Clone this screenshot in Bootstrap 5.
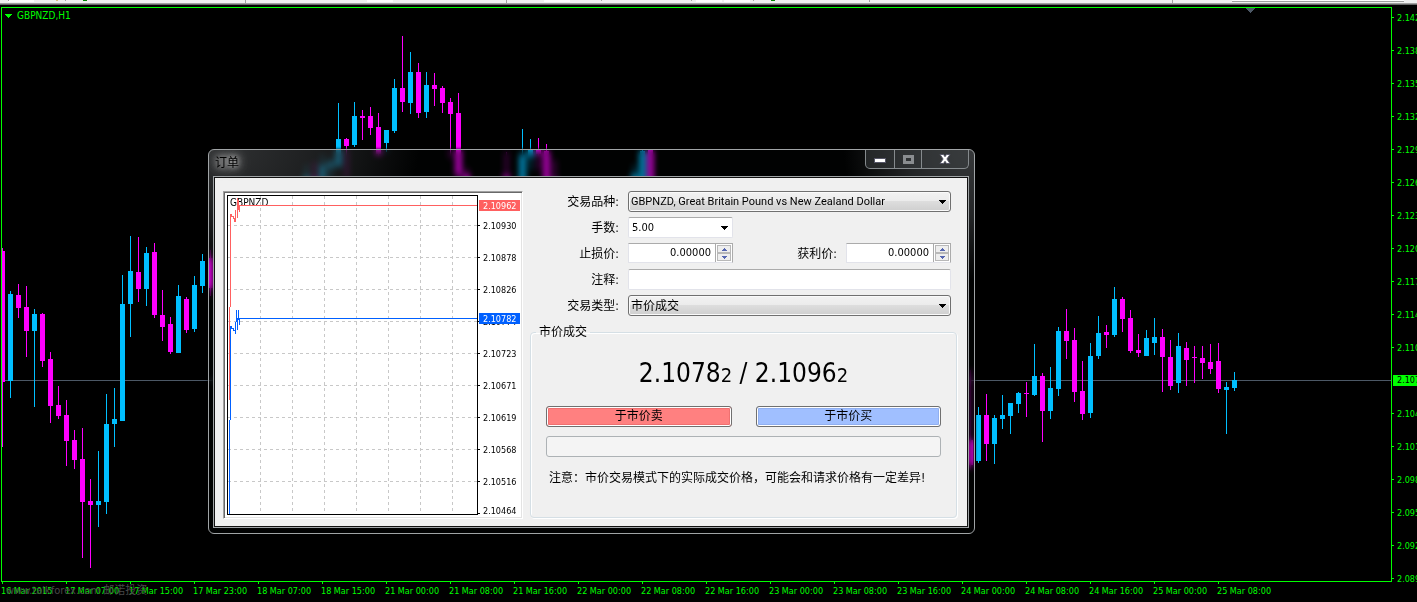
<!DOCTYPE html>
<html lang="zh-CN">
<head>
<meta charset="utf-8">
<meta name="viewport" content="width=device-width, initial-scale=1">
<title>GBPNZD,H1</title>
<link href="https://cdn.jsdelivr.net/npm/bootstrap@5.3.0/dist/css/bootstrap.min.css" rel="stylesheet">
<style>
:root{--lime:#0f0;--ui:"DejaVu Sans Condensed","Noto Sans CJK SC",sans-serif}
body{background:#000;font-family:var(--ui);font-size:12px;line-height:20px;color:#000}
svg{shape-rendering:crispEdges}
.strip{height:5px;background:#f0f0f0;border-bottom:1px solid #696969;box-shadow:inset 0 -1px #a0a0a0}
.strip svg{background:#f0f0f0}
.pane{min-width:0}
.work{min-height:0}
.plot{border:1px solid var(--lime);margin:2px 0 0 1px;min-width:0}
.symbol{left:2px;top:0;color:var(--lime);font-size:10px;line-height:16px;gap:5px}
.prices{width:25px;padding-top:3px;color:var(--lime);font-size:9px;line-height:20px}
.prices div{height:33px;flex:none;position:relative;padding-left:5px}
.prices div::before{content:"";position:absolute;left:0;top:9px;width:2px;height:1px;background:var(--lime)}
.prices .now{line-height:11px;height:11px;margin:4px 0 18px 1px;padding-left:4px;background:var(--lime);color:#000}
.prices .now::before{display:none}
.times{height:20px;padding-left:1px;color:var(--lime);font-size:9px;line-height:18px}
.times div{width:64px;flex:none;position:relative}
.times div::before{content:"";position:absolute;left:1px;top:0;width:1px;height:2px;background:var(--lime)}
.stamp{left:6px;bottom:0;color:#484848;font-size:11px;line-height:22px}
.dlg{left:208px;top:149px;width:767px;padding:0 5px 5px 4px;border:1px solid #a0a4a6;border-radius:6px;overflow:hidden;
 -webkit-backdrop-filter:blur(3px);backdrop-filter:blur(3px);box-shadow:0 0 3px #000;
 background:radial-gradient(ellipse 210px 120px at 0 0,rgba(70,72,74,.7) 0,rgba(50,52,54,.5) 60%,transparent),
 radial-gradient(ellipse 130px 130px at 100% 0,rgba(60,62,64,.9),rgba(50,52,54,.7) 50%,transparent),rgba(10,15,20,.1)}
.cap{height:26px;padding-left:2px}
.cap h1{font-size:12px;line-height:20px;padding-top:3px;text-shadow:0 0 5px #bbb,0 0 8px #bbb,0 0 12px #aaa,0 0 16px #999}
.winbtns{height:19px;border:1px solid #858a8d;border-top:0;border-radius:0 0 5px 5px;overflow:hidden;background:rgba(60,64,66,.5)}
.winbtns button{border:0;border-left:1px solid #858a8d;background:none;padding:0;width:27px;display:flex;align-items:center;justify-content:center}
.winbtns button:first-child{border-left:0;width:28px}
.winbtns button:last-child{width:47px}
.winbtns button:first-child svg{margin-top:4px}
.winbtns button:last-child svg{shape-rendering:auto}
.client{background:#f0f0f0;border:1px solid #a0a4a6;outline:1px solid #111;outline-offset:-2px;padding:14px 11px 8px 9px;gap:7px}
.tick{border:1px solid;border-color:#a0a0a0 #fff #fff #a0a0a0;box-shadow:inset 1px 1px #696969,inset -1px -1px #e3e3e3;background:#fff;width:300px;height:328px;flex:none}
.tick text{font:9px "DejaVu Sans Condensed",sans-serif}
.tick .pair{font-size:10px}
.orderform{min-width:0}
.field{display:grid;grid-template-columns:89px 105px 1fr 105px;column-gap:9px;height:26px;margin-right:6px}
.field label{text-align:right;height:20px;line-height:22px}
.field .wide{grid-column:2/5}
.ctl{width:100%;height:21px;border:1px solid;border-color:#ababab #e2e3ea #e2e3ea;border-radius:2px;background:#fff;padding:0 3px;font:11px/19px var(--ui);color:#000;box-shadow:none}
select.ctl{appearance:none;-webkit-appearance:none;background:#fff url("data:image/svg+xml,%3Csvg xmlns='http://www.w3.org/2000/svg' width='8' height='4' shape-rendering='crispEdges'%3E%3Cpath d='M0 0h8L4 4z'/%3E%3C/svg%3E") no-repeat right 4px center}
select.drop{border-color:#707070;border-radius:3px;padding-left:2px;font-family:Roboto,"Noto Sans CJK SC",sans-serif;background-image:url("data:image/svg+xml,%3Csvg xmlns='http://www.w3.org/2000/svg' width='8' height='4' shape-rendering='crispEdges'%3E%3Cpath d='M0 0h8L4 4z'/%3E%3C/svg%3E"),linear-gradient(#f2f2f2,#ebebeb 50%,#ddd 50%,#cfcfcf);background-position:right 4px center,0 0;background-size:auto,cover;box-shadow:inset 0 0 0 1px #fafafa}
select.cjk{font-size:12px;line-height:21px}
.spin{height:20px;border:1px solid;border-color:#ababab #ababab #e2e3ea #e2e3ea;background:#fff}
.spin input{min-width:0;width:100%;border:0;padding:0 4px 0 0;text-align:right;font:11px/18px var(--ui);background:none;outline:0}
.spin div{width:17px;flex:none;border-left:1px solid #ababab;padding:1px}
.spin button{border:1px solid #b8b8b8;background:#eee;padding:0;flex:1;display:flex;align-items:center;justify-content:center}
.deal{border:1px solid #d5dfe5;border-radius:4px;box-shadow:inset 1px 1px #fff,1px 1px #fff;height:196px;margin-top:1px;padding:0 15px}
.deal legend{float:none;width:auto;font-size:12px;line-height:20px;margin:0 0 0 -10px;padding:0 3px}
.quote{font-size:26px;line-height:36px;margin:13px 0;white-space:pre}
.quote span{font-size:20px}
.act{flex:1;height:21px;border:1px solid #707070;border-radius:3px;padding:0;font:12px/19px var(--ui);color:#000}
.sell{background:#ff8080;box-shadow:inset 0 0 0 1px #fff,inset 0 0 0 2px #ef7070}
.buy{background:#a0bfff;box-shadow:inset 0 0 0 1px #fff,inset 0 0 0 2px #90aff0}
.blank{height:21px;border:1px solid #adb2b5;border-radius:3px;background:#f4f4f4;margin-top:9px}
.note{margin:11px 0 0 3px;white-space:nowrap}
</style>
</head>
<body>
<div class="d-flex flex-column vh-100 overflow-hidden position-relative">
 <div class="strip flex-shrink-0"><svg class="d-block" width="100%" height="3">
  <path fill="#fff" d="M8 0h26v2H8zM367 0h26v2h-26zM544 0h26v2h-26zM696 0h26v2h-26zM724 0h26v2h-26zM1232 0h172v1h-172z"/>
  <path fill="#a0a0a0" d="M8 0h1v1H8zM65 0h1v1h-1zM245 0h1v3h-1zM506 0h1v3h-1zM601 0h1v1h-1zM691 0h1v1h-1zM753 0h1v1h-1zM869 0h1v2h-1zM1172 0h1v3h-1zM1232 1h172v1h-172z"/>
  <path fill="#008000" d="M83 0h4v1h-4zM771 0h4v1h-4z"/><path fill="#d8c080" d="M56 0h2v1h-2z"/></svg></div>
 <div class="work d-flex flex-grow-1">
  <div class="pane d-flex flex-column flex-grow-1">
   <div class="plot flex-grow-1 position-relative overflow-hidden">
    <svg class="position-absolute top-0 start-0" id="bars" width="100%" height="100%" role="img" aria-label="GBPNZD H1"></svg>
    <div class="symbol position-absolute d-flex align-items-center"><svg width="8" height="4"><path d="M0 0h8L4 4z" fill="#0f0"/></svg>GBPNZD,H1</div>
   </div>
   <div class="times d-flex text-nowrap" id="times"></div>
  </div>
  <div class="prices d-flex flex-column overflow-hidden" id="prices"></div>
 </div>
 <div class="stamp position-absolute text-nowrap">www.talkforex.com 邮诺投资</div>

 <section class="dlg position-absolute" role="dialog" aria-labelledby="dlgTitle">
  <header class="cap d-flex justify-content-between align-items-start">
   <h1 id="dlgTitle" class="m-0 fw-normal">订单</h1>
   <div class="winbtns d-flex">
    <button type="button" aria-label="最小化"><svg width="12" height="6"><path fill="#fff" stroke="#556" d="M.5.5h11v4H.5z"/></svg></button>
    <button type="button" aria-label="最大化"><svg width="11" height="9"><path fill="none" stroke="#8a8d90" stroke-width="3" d="M1.5 1.5h8v6h-8z"/></svg></button>
    <button type="button" aria-label="关闭"><svg width="12" height="10"><path fill="#fff" stroke="#556" d="M1 .5h3.500L6 2.700 7.500.5H11L7.900 5 11 9.500H7.500L6 7.300 4.500 9.500H1L4.100 5z"/></svg></button>
   </div>
  </header>
  <div class="client d-flex">
   <div class="tick"><svg id="tick" width="298" height="326" viewBox="224 192 298 326" class="d-block"></svg></div>
   <form class="orderform flex-grow-1">
    <div class="field"><label for="sym">交易品种:</label><select id="sym" class="ctl drop wide"><option>GBPNZD, Great Britain Pound vs New Zealand Dollar</option></select></div>
    <div class="field"><label for="vol">手数:</label><select id="vol" class="ctl"><option>5.00</option></select></div>
    <div class="field"><label for="sl">止损价:</label>
     <div class="spin d-flex"><input id="sl" value="0.00000"><div class="d-flex flex-column"><button type="button" aria-label="+"><svg width="6" height="3"><path fill="#5566b0" d="M0 3h6L3 0z"/></svg></button><button type="button" aria-label="-"><svg width="6" height="3"><path fill="#5566b0" d="M0 0h6L3 3z"/></svg></button></div></div>
     <label for="tp">获利价:</label>
     <div class="spin d-flex"><input id="tp" value="0.00000"><div class="d-flex flex-column"><button type="button" aria-label="+"><svg width="6" height="3"><path fill="#5566b0" d="M0 3h6L3 0z"/></svg></button><button type="button" aria-label="-"><svg width="6" height="3"><path fill="#5566b0" d="M0 0h6L3 3z"/></svg></button></div></div></div>
    <div class="field"><label for="cmt">注释:</label><input id="cmt" class="ctl wide"></div>
    <div class="field"><label for="kind">交易类型:</label><select id="kind" class="ctl drop cjk wide"><option>市价成交</option></select></div>
    <fieldset class="deal"><legend>市价成交</legend>
     <div class="quote text-center">2.1078<span>2</span> / 2.1096<span>2</span></div>
     <div class="d-flex gap-4"><button type="button" class="act sell">于市价卖</button><button type="button" class="act buy">于市价买</button></div>
     <div class="blank"></div>
     <p class="note">注意：市价交易模式下的实际成交价格，可能会和请求价格有一定差异!</p>
    </fieldset>
   </form>
  </div>
 </section>
</div>
<script src="https://cdn.jsdelivr.net/npm/bootstrap@5.3.0/dist/js/bootstrap.bundle.min.js"></script>
<script>
// x, high, low, body top, body bottom, direction (u/d)
const bars = `2 248 447 251 382 d|10 291 398 294 381 u|18 284 318 295 308 d|26 286 357 307 331 d|34 309 407 314 331 u|42 313 367 314 361 d|50 352 423 359 406 d|58 386 419 405 416 d|66 400 466 415 441 d|74 430 469 440 460 d|82 428 558 459 502 d|90 479 568 501 505 d|98 451 527 501 505 u|106 394 514 424 502 u|114 388 447 419 424 u|122 275 421 304 421 u|130 236 337 271 304 u|138 237 302 272 289 d|146 247 306 253 289 u|154 243 318 252 315 d|162 290 341 315 327 d|170 317 354 324 352 d|178 285 353 296 353 u|186 297 333 299 330 d|194 276 332 285 329 u|202 254 293 261 286 u|210 250 296 258 288 d|306 165 190 176 190 u|314 162 190 178 190 d|322 155 190 165 190 u|330 158 180 162 168 u|338 103 168 139 166 u|346 138 178 139 146 d|354 102 147 116 145 u|362 110 140 116 118 d|370 107 135 116 128 d|378 113 156 127 154 d|386 130 152 130 143 u|394 79 133 88 131 u|402 36 112 88 102 d|410 52 114 72 103 u|418 63 118 72 113 d|426 72 118 85 112 u|434 73 106 85 89 d|442 86 113 88 103 d|450 98 158 102 114 d|458 93 190 113 175 d|466 168 190 174 190 d|506 152 190 175 180 d|522 129 190 155 190 u|530 139 170 149 157 u|538 138 170 149 154 d|546 144 190 151 190 d|554 160 190 180 190 d|634 165 190 174 190 u|642 150 190 151 190 u|650 150 190 150 190 d|970 370 470 440 465 d|978 407 463 415 461 u|986 394 461 415 444 d|994 415 464 418 444 u|1002 395 429 415 419 u|1010 403 434 403 416 u|1018 392 413 393 404 u|1026 382 417 393 394 d|1034 344 396 376 395 u|1042 373 442 376 411 d|1050 367 419 388 411 u|1058 327 396 331 389 u|1066 309 359 331 341 d|1074 328 402 340 392 d|1082 361 420 391 414 d|1090 343 418 356 413 u|1098 316 359 333 356 u|1106 325 348 332 335 d|1114 287 337 299 335 u|1122 297 332 299 319 d|1130 310 353 318 351 d|1138 334 357 350 353 d|1146 330 356 338 356 u|1154 318 355 337 343 u|1162 329 392 337 357 d|1170 340 390 357 386 d|1178 333 393 346 383 u|1186 342 386 348 360 d|1194 346 383 357 358 d|1202 346 379 358 363 d|1210 344 374 362 369 d|1218 343 393 361 389 d|1226 382 434 387 390 u|1234 372 391 380 388 u`;
let s = '<g transform="translate(-2,-8)"><path d="M1246 8h9l-4 5h-1z" fill="#4c5866"/><path d="M2 380h3000v1H2z" fill="#4c5866"/>';
for (const b of bars.split('|')) {
  const [x, h, l, t, m, c] = b.split(' ');
  s += `<path fill="${c === 'u' ? '#00bfff' : '#f0f'}" d="M${x} ${h}h1V${l}h-1zM${x - 2} ${t}h5V${m}h-5z"/>`;
}
document.getElementById('bars').innerHTML = s + '</g>';

document.getElementById('times').innerHTML = ['16 Mar 2015','17 Mar 07:00','17 Mar 15:00','17 Mar 23:00','18 Mar 07:00','18 Mar 15:00','21 Mar 00:00','21 Mar 08:00','21 Mar 16:00','22 Mar 00:00','22 Mar 08:00','22 Mar 16:00','23 Mar 00:00','23 Mar 08:00','23 Mar 16:00','24 Mar 00:00','24 Mar 08:00','24 Mar 16:00','25 Mar 00:00','25 Mar 08:00'].map(t => `<div>${t}</div>`).join('');
document.getElementById('prices').innerHTML = ['2.142','2.138','2.135','2.132','2.129','2.126','2.123','2.120','2.117','2.114','2.110','2.107','2.104','2.101','2.098','2.095','2.092','2.089'].map(p => `<div${p === '2.107' ? ' class="now"' : ''}>${p}</div>`).join('');

let g = '<g stroke="#c8c8c8" stroke-dasharray="3 3">';
for (let x = 260; x < 470; x += 32) g += `<path d="M${x}.5 196V514"/>`;
for (let y = 225; y < 490; y += 32) g += `<path d="M228 ${y}.5H477"/>`;
g += '</g><path fill="none" stroke="#000" d="M227.500 195.500H477.500V514.500H227.500z"/>';
['2.10930','2.10878','2.10826','2.10774','2.10723','2.10671','2.10619','2.10568','2.10516','2.10464'].forEach((p, i) => {
  const y = i === 9 ? 510 : 225 + 32 * i;
  g += `<path d="M478 ${i === 9 ? 513 : y}h2v1h-2z"/><text x="483" y="${y + 4}">${p}</text>`;
});
g += '<text x="230" y="206" class="pair">GBPNZD</text>';
const trace = (c, a) => `<path fill="none" stroke="${c}" d="${a}"/>`;
g += trace('#ff6060', 'M229.500 400V307M230.500 307V214.500H231.500V216.500H233.500V218.500H234.500V221.500H235.500V210V221M237.500 198V217.500M238.500 200V210M239.500 212V205.500H477');
g += trace('#0060ff', 'M229.500 514V420M230.500 420V326.500H231.500V328.500H233.500V330.500H235.500V333.500V322M236.500 310V322M237.500 318V330M238.500 310V320M239.500 325V318.500H477');
g += '<path fill="#ff6060" d="M479 200h41v11h-41z"/><path fill="#0060ff" d="M479 313h41v11h-41z"/><text x="483" y="209" fill="#fff">2.10962</text><text x="483" y="322" fill="#fff">2.10782</text>';
document.getElementById('tick').innerHTML = g;
</script>
</body>
</html>
